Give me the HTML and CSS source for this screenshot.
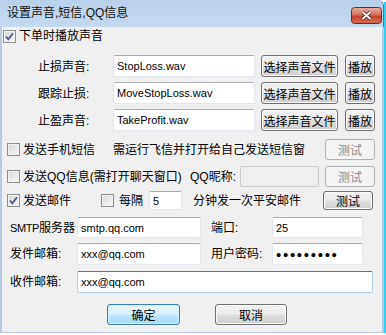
FILE: index.html
```html
<!DOCTYPE html>
<html lang="zh-CN">

<head>
    <meta charset="UTF-8">
    <title>设置声音,短信,QQ信息</title>
    <link rel="stylesheet" href="styles.css">
</head>

<body>
    <div class="window">
        <div class="titlebar">
            <span class="title">设置声音,短信,QQ信息</span>
            <span class="close">
                <svg width="31" height="17" viewBox="0 0 31 17">
                    <defs>
                        <linearGradient id="cg" x1="0" y1="0" x2="0" y2="1">
                            <stop offset="0" stop-color="#eab0a2" />
                            <stop offset="0.45" stop-color="#d27262" />
                            <stop offset="0.55" stop-color="#c2442f" />
                            <stop offset="1" stop-color="#d7705a" />
                        </linearGradient>
                    </defs>
                    <rect x="0.5" y="0.5" width="30" height="16" rx="3" fill="url(#cg)" stroke="#6b2c27" />
                    <path d="M11.5 5 L19.5 12 M19.5 5 L11.5 12" stroke="#4a1d1a" stroke-width="3.6" />
                    <path d="M11.5 5 L19.5 12 M19.5 5 L11.5 12" stroke="#fff" stroke-width="1.8" />
                </svg>
            </span>
        </div>

        <div class="client">
            <div class="row r-play">
                <label class="opt">
                    <span class="chk on"><svg width="11" height="11" viewBox="0 0 11 11"><path d="M2 5.5 L4.3 8.3 L9 2.2" fill="none" stroke="#4a5c8c" stroke-width="1.8" /></svg></span>
                    <span>下单时播放声音</span>
                </label>
            </div>

            <div class="row sound first">
                <span class="lbl-sound">止损声音:</span>
                <input class="edit w-file" value="StopLoss.wav">
                <button class="btn w-pick">选择声音文件</button>
                <button class="btn w-play">播放</button>
            </div>
            <div class="row sound">
                <span class="lbl-sound">跟踪止损:</span>
                <input class="edit w-file" value="MoveStopLoss.wav">
                <button class="btn w-pick">选择声音文件</button>
                <button class="btn w-play">播放</button>
            </div>
            <div class="row sound">
                <span class="lbl-sound">止盈声音:</span>
                <input class="edit w-file" value="TakeProfit.wav">
                <button class="btn w-pick">选择声音文件</button>
                <button class="btn w-play">播放</button>
            </div>

            <div class="row r-sms">
                <label class="opt w-sms">
                    <span class="chk"></span>
                    <span>发送手机短信</span>
                </label>
                <span>需运行飞信并打开给自己发送短信窗</span>
                <button class="btn btn-test" disabled>测试</button>
            </div>

            <div class="row r-qq">
                <label class="opt w-qq">
                    <span class="chk"></span>
                    <span>发送QQ信息(需打开聊天窗口)</span>
                </label>
                <span class="lbl-nick">QQ昵称:</span>
                <input class="edit w-nick" disabled>
                <button class="btn btn-test" disabled>测试</button>
            </div>

            <div class="row r-mail">
                <label class="opt w-mail">
                    <span class="chk on"><svg width="11" height="11" viewBox="0 0 11 11"><path d="M2 5.5 L4.3 8.3 L9 2.2" fill="none" stroke="#4a5c8c" stroke-width="1.8" /></svg></span>
                    <span>发送邮件</span>
                </label>
                <label class="opt every">
                    <span class="chk"></span>
                    <span>每隔</span>
                </label>
                <input class="edit w-min" value="5">
                <span class="after-min">分钟发一次平安邮件</span>
                <button class="btn btn-mailtest">测试</button>
            </div>

            <div class="row r-smtp">
                <span class="lbl-mail"><span class="smtp">SMTP</span>服务器</span>
                <input class="edit w-mid" value="smtp.qq.com">
                <span class="lbl-right">端口:</span>
                <input class="edit w-right" value="25">
            </div>
            <div class="row r-from">
                <span class="lbl-mail">发件邮箱:</span>
                <input class="edit w-mid" value="xxx@qq.com">
                <span class="lbl-right">用户密码:</span>
                <input class="edit w-right pwd" type="password" value="123456789">
            </div>
            <div class="row r-to">
                <span class="lbl-mail">收件邮箱:</span>
                <input class="edit w-long focus" value="xxx@qq.com">
            </div>

            <div class="row r-buttons">
                <button class="btn btn-ok">确定</button>
                <button class="btn btn-cancel">取消</button>
            </div>
        </div>
    </div>
</body>

</html>
```

FILE: styles.css
```css
* {
    margin: 0;
    padding: 0;
}

body {
    background: #fff;
    font-family: "Liberation Sans", "Noto Sans CJK SC", sans-serif;
    font-size: 12px;
    line-height: 16px;
    color: #000;
}

/* 창 */
.window {
    width: 384px;
    height: 333px;
    box-shadow: 2px 2px 0 #37cdef;
}

.titlebar {
    height: 27px;
    box-sizing: border-box;
    display: flex;
    background: linear-gradient(#b9d1ea, #c6daef);
    border-right: 1px solid #54708f;
    border-top-right-radius: 6px;
}

.title {
    padding-left: 7px;
    line-height: 26px;
    color: #111;
}

.close {
    margin-left: auto;
    margin-top: 7px;
    margin-right: 1px;
    height: 17px;
}

.close svg {
    display: block;
}

.client {
    height: 306px;
    box-sizing: border-box;
    background: #f0f0f0;
    border-left: 2px solid #b7cbe2;
    border-right: 2px solid #b7cbe2;
    border-bottom: 1px solid #b7cbe2;
}

.row {
    display: flex;
    align-items: center;
    white-space: nowrap;
}

/* 체크박스 */
.opt {
    display: flex;
    align-items: center;
    gap: 3px;
}

.chk {
    width: 13px;
    height: 13px;
    box-sizing: border-box;
    border: 1px solid #8e8f8f;
    background: linear-gradient(135deg, #d8d8d8, #f7f7f7);
    box-shadow: inset 0 0 0 1px #f3f3f3;
    flex: none;
}

.chk svg {
    display: block;
    margin: 0;
}

/* 입력칸 */
.edit {
    box-sizing: border-box;
    height: 100%;
    border: 1px solid #e2e7ed;
    border-top-color: #abadb3;
    border-radius: 2px;
    background: #fff;
    padding: 0 3px;
    font-family: "Liberation Sans", "Noto Sans CJK SC", sans-serif;
    font-size: 11px;
    color: #000;
    outline: none;
}

.edit:disabled {
    background: #f0f0f0;
    border-color: #c9cdd2;
}

.edit.focus {
    border-color: #b4cde6;
    border-top-color: #3d7bad;
}

.pwd {
    font-size: 15px;
    letter-spacing: 1.7px;
    padding-left: 3px;
}

/* 버튼 */
.btn {
    box-sizing: border-box;
    height: 100%;
    border: 1px solid #707070;
    border-radius: 3px;
    background: linear-gradient(#f2f2f2 0, #ebebeb 48%, #dddddd 52%, #cfcfcf 100%);
    box-shadow: inset 0 0 0 1px #fbfbfb;
    font-family: "Noto Sans CJK SC", sans-serif;
    font-size: 12px;
    color: #000;
    flex: none;
}

.btn:disabled {
    border-color: #adb2b5;
    background: #f4f4f4;
    box-shadow: none;
    color: #8a8a8a;
}

/* 첫 줄 */
.r-play {
    height: 18px;
    padding-left: 1px;
}

/* 소리 파일 줄 */
.sound {
    height: 22px;
    margin-top: 5px;
    padding-left: 36px;
}

.sound.first {
    margin-top: 10px;
}

.lbl-sound {
    width: 75px;
    padding-top: 1px;
}

.w-file {
    width: 142px;
}

.w-pick {
    width: 77px;
    margin-left: 6px;
}

.w-play {
    width: 30px;
    margin-left: 7px;
}

/* 문자, QQ, 메일 */
.r-sms {
    height: 21px;
    margin-top: 8px;
    padding-left: 5px;
}

.w-sms {
    width: 106px;
}

.btn-test {
    width: 50px;
    margin-left: auto;
    margin-right: 7px;
}

.r-qq {
    height: 21px;
    margin-top: 6px;
    padding-left: 5px;
}

.w-qq {
    width: 183px;
}

.lbl-nick {
    width: 50px;
}

.w-nick {
    width: 79px;
}

.r-mail {
    height: 19px;
    margin-top: 4px;
    padding-left: 5px;
}

.w-mail {
    width: 94px;
}

.every {
    gap: 5px;
}

.w-min {
    width: 33px;
    margin-left: 6px;
}

.after-min {
    margin-left: 11px;
}

.btn-mailtest {
    width: 50px;
    margin-left: auto;
    margin-right: 9px;
}

/* SMTP */
.r-smtp {
    height: 21px;
    margin-top: 7px;
    padding-left: 8px;
}

.r-from {
    height: 22px;
    margin-top: 5px;
    padding-left: 8px;
}

.r-to {
    height: 22px;
    margin-top: 6px;
    padding-left: 8px;
}

.lbl-mail {
    width: 67px;
}

.smtp {
    font-size: 11px;
    letter-spacing: -0.4px;
}

.w-mid {
    width: 124px;
}

.lbl-right {
    width: 61px;
    margin-left: 10px;
}

.w-right {
    width: 91px;
}

.w-long {
    width: 296px;
}

/* 확인, 취소 */
.r-buttons {
    height: 21px;
    margin-top: 11px;
    padding-left: 105px;
}

.btn-ok {
    width: 73px;
    border-color: #3c7fb1;
    background: linear-gradient(#eaf6fd 0, #d9f0fc 48%, #bee6fd 52%, #a7d9f5 100%);
    box-shadow: inset 0 0 0 1px #cfeefc;
}

.btn-cancel {
    width: 72px;
    margin-left: 35px;
}
```
